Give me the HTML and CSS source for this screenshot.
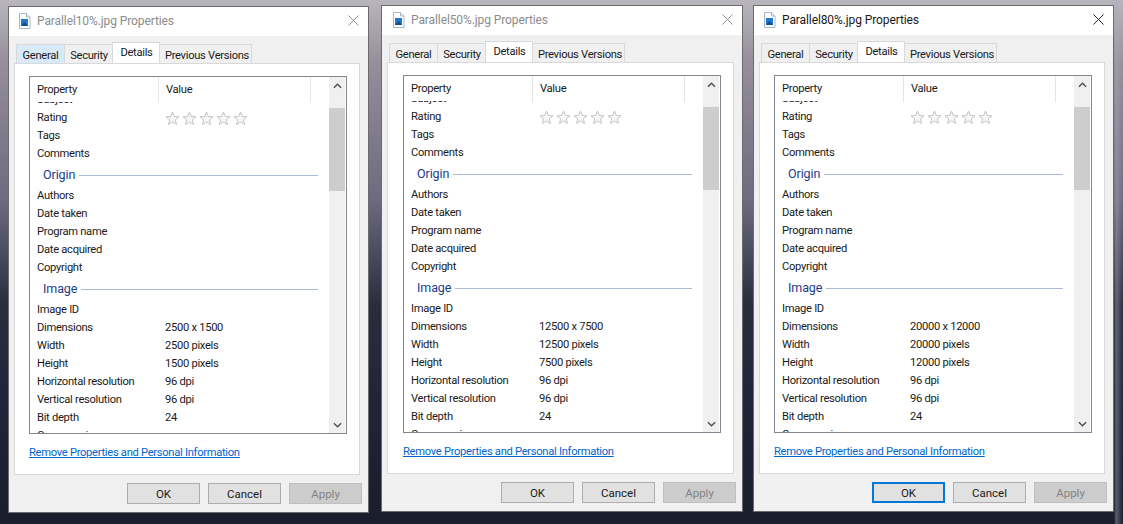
FILE: index.html
```html
<!DOCTYPE html>
<html lang="en">
<head>
<meta charset="utf-8">
<title>Properties</title>
<link rel="stylesheet" href="styles.css">
</head>
<body>
<svg class="defs" width="0" height="0" aria-hidden="true">
  <symbol id="file" viewBox="0 0 14 16"><path d="M1.500.5h7l3.500 3.500v11.500h-10.500z" fill="#fff" stroke="#a9b6c4"/><path d="M8.500.5v3.500h3.500" fill="#e8eef4" stroke="#a9b6c4"/><rect x="3" y="6" width="7" height="7" fill="#1f78c8"/><path d="M3 13l3.500-4 3.500 4z" fill="#0f4f96"/></symbol>
  <symbol id="close" viewBox="0 0 12 12"><path d="M.5.5l11 11M11.500.5l-11 11" fill="none" stroke="currentColor"/></symbol>
  <symbol id="star" viewBox="0 0 15 15"><path d="M7.500 1l1.800 4.500 4.700.3-3.700 3 1.200 4.700-4-2.600-4 2.600 1.200-4.700-3.700-3 4.700-.3z" fill="#f7f7f7" stroke="#c4c4c4"/></symbol>
  <symbol id="up" viewBox="0 0 10 6"><path d="M1 5l4-4 4 4" fill="none" stroke="#505050" stroke-width="1.600"/></symbol>
  <symbol id="down" viewBox="0 0 10 6"><path d="M1 1l4 4 4-4" fill="none" stroke="#505050" stroke-width="1.600"/></symbol>
</svg>

<section class="window win-a">
  <header class="titlebar"><svg class="file-icon"><use href="#file"/></svg><h1 class="title">Parallel10%.jpg Properties</h1><svg class="close"><use href="#close"/></svg></header>
  <nav class="tabs"><span class="tab tab-hover">General</span><span class="tab">Security</span><span class="tab tab-active">Details</span><span class="tab">Previous Versions</span></nav>
  <div class="panel">
    <div class="listbox">
      <div class="listmain">
        <div class="listhead"><span class="col col-name">Property</span><span class="col col-value">Value</span><span class="col col-rest"></span></div>
        <div class="listclip"><div class="rows">
          <div class="row"><span class="name">Subject</span></div>
          <div class="row"><span class="name">Rating</span><span class="stars"><svg class="star"><use href="#star"/></svg><svg class="star"><use href="#star"/></svg><svg class="star"><use href="#star"/></svg><svg class="star"><use href="#star"/></svg><svg class="star"><use href="#star"/></svg></span></div>
          <div class="row"><span class="name">Tags</span></div>
          <div class="row"><span class="name">Comments</span></div>
          <div class="group"><span class="group-name">Origin</span><span class="rule"></span></div>
          <div class="row"><span class="name">Authors</span></div>
          <div class="row"><span class="name">Date taken</span></div>
          <div class="row"><span class="name">Program name</span></div>
          <div class="row"><span class="name">Date acquired</span></div>
          <div class="row"><span class="name">Copyright</span></div>
          <div class="group"><span class="group-name">Image</span><span class="rule"></span></div>
          <div class="row"><span class="name">Image ID</span></div>
          <div class="row"><span class="name">Dimensions</span><span>2500 x 1500</span></div>
          <div class="row"><span class="name">Width</span><span>2500 pixels</span></div>
          <div class="row"><span class="name">Height</span><span>1500 pixels</span></div>
          <div class="row"><span class="name">Horizontal resolution</span><span>96 dpi</span></div>
          <div class="row"><span class="name">Vertical resolution</span><span>96 dpi</span></div>
          <div class="row"><span class="name">Bit depth</span><span>24</span></div>
          <div class="row"><span class="name">Compression</span></div>
        </div></div>
      </div>
      <div class="scrollbar"><span class="arrow"><svg class="chev"><use href="#up"/></svg></span><span class="track"><span class="thumb"></span></span><span class="arrow"><svg class="chev"><use href="#down"/></svg></span></div>
    </div>
    <a class="link">Remove Properties and Personal Information</a>
  </div>
  <footer class="buttons"><button class="btn">OK</button><button class="btn">Cancel</button><button class="btn btn-off">Apply</button></footer>
</section>

<section class="window win-b">
  <header class="titlebar"><svg class="file-icon"><use href="#file"/></svg><h1 class="title">Parallel50%.jpg Properties</h1><svg class="close"><use href="#close"/></svg></header>
  <nav class="tabs"><span class="tab">General</span><span class="tab">Security</span><span class="tab tab-active">Details</span><span class="tab">Previous Versions</span></nav>
  <div class="panel">
    <div class="listbox">
      <div class="listmain">
        <div class="listhead"><span class="col col-name">Property</span><span class="col col-value">Value</span><span class="col col-rest"></span></div>
        <div class="listclip"><div class="rows">
          <div class="row"><span class="name">Subject</span></div>
          <div class="row"><span class="name">Rating</span><span class="stars"><svg class="star"><use href="#star"/></svg><svg class="star"><use href="#star"/></svg><svg class="star"><use href="#star"/></svg><svg class="star"><use href="#star"/></svg><svg class="star"><use href="#star"/></svg></span></div>
          <div class="row"><span class="name">Tags</span></div>
          <div class="row"><span class="name">Comments</span></div>
          <div class="group"><span class="group-name">Origin</span><span class="rule"></span></div>
          <div class="row"><span class="name">Authors</span></div>
          <div class="row"><span class="name">Date taken</span></div>
          <div class="row"><span class="name">Program name</span></div>
          <div class="row"><span class="name">Date acquired</span></div>
          <div class="row"><span class="name">Copyright</span></div>
          <div class="group"><span class="group-name">Image</span><span class="rule"></span></div>
          <div class="row"><span class="name">Image ID</span></div>
          <div class="row"><span class="name">Dimensions</span><span>12500 x 7500</span></div>
          <div class="row"><span class="name">Width</span><span>12500 pixels</span></div>
          <div class="row"><span class="name">Height</span><span>7500 pixels</span></div>
          <div class="row"><span class="name">Horizontal resolution</span><span>96 dpi</span></div>
          <div class="row"><span class="name">Vertical resolution</span><span>96 dpi</span></div>
          <div class="row"><span class="name">Bit depth</span><span>24</span></div>
          <div class="row"><span class="name">Compression</span></div>
        </div></div>
      </div>
      <div class="scrollbar"><span class="arrow"><svg class="chev"><use href="#up"/></svg></span><span class="track"><span class="thumb"></span></span><span class="arrow"><svg class="chev"><use href="#down"/></svg></span></div>
    </div>
    <a class="link">Remove Properties and Personal Information</a>
  </div>
  <footer class="buttons"><button class="btn">OK</button><button class="btn">Cancel</button><button class="btn btn-off">Apply</button></footer>
</section>

<section class="window win-c">
  <header class="titlebar"><svg class="file-icon"><use href="#file"/></svg><h1 class="title title-active">Parallel80%.jpg Properties</h1><svg class="close close-active"><use href="#close"/></svg></header>
  <nav class="tabs"><span class="tab">General</span><span class="tab">Security</span><span class="tab tab-active">Details</span><span class="tab">Previous Versions</span></nav>
  <div class="panel">
    <div class="listbox">
      <div class="listmain">
        <div class="listhead"><span class="col col-name">Property</span><span class="col col-value">Value</span><span class="col col-rest"></span></div>
        <div class="listclip"><div class="rows">
          <div class="row"><span class="name">Subject</span></div>
          <div class="row"><span class="name">Rating</span><span class="stars"><svg class="star"><use href="#star"/></svg><svg class="star"><use href="#star"/></svg><svg class="star"><use href="#star"/></svg><svg class="star"><use href="#star"/></svg><svg class="star"><use href="#star"/></svg></span></div>
          <div class="row"><span class="name">Tags</span></div>
          <div class="row"><span class="name">Comments</span></div>
          <div class="group"><span class="group-name">Origin</span><span class="rule"></span></div>
          <div class="row"><span class="name">Authors</span></div>
          <div class="row"><span class="name">Date taken</span></div>
          <div class="row"><span class="name">Program name</span></div>
          <div class="row"><span class="name">Date acquired</span></div>
          <div class="row"><span class="name">Copyright</span></div>
          <div class="group"><span class="group-name">Image</span><span class="rule"></span></div>
          <div class="row"><span class="name">Image ID</span></div>
          <div class="row"><span class="name">Dimensions</span><span>20000 x 12000</span></div>
          <div class="row"><span class="name">Width</span><span>20000 pixels</span></div>
          <div class="row"><span class="name">Height</span><span>12000 pixels</span></div>
          <div class="row"><span class="name">Horizontal resolution</span><span>96 dpi</span></div>
          <div class="row"><span class="name">Vertical resolution</span><span>96 dpi</span></div>
          <div class="row"><span class="name">Bit depth</span><span>24</span></div>
          <div class="row"><span class="name">Compression</span></div>
        </div></div>
      </div>
      <div class="scrollbar"><span class="arrow"><svg class="chev"><use href="#up"/></svg></span><span class="track"><span class="thumb"></span></span><span class="arrow"><svg class="chev"><use href="#down"/></svg></span></div>
    </div>
    <a class="link">Remove Properties and Personal Information</a>
  </div>
  <footer class="buttons"><button class="btn btn-default">OK</button><button class="btn">Cancel</button><button class="btn btn-off">Apply</button></footer>
</section>
</body>
</html>
```
FILE: styles.css
```css
* { box-sizing: border-box; }
html, body { margin: 0; height: 100%; }
body {
  position: relative;
  width: 1123px;
  height: 524px;
  overflow: hidden;
  font: 11.200px/16px Roboto, "Open Sans", sans-serif;
  letter-spacing: -.3px;
  color: #1a1a1a;
  background:
    linear-gradient(90deg, transparent 1114px, rgba(170,172,185,.45) 1116px, transparent 1123px),
    linear-gradient(#b9b5bd 0, #948f9a 12%, #86808f 22%, #6d6b80 38%, #45465a 50%, #2b2d3e 58%, #22253a 75%, #1a1d2c 100%);
}
.defs { position: absolute; }
.window {
  position: absolute;
  width: 361px;
  height: 507px;
  display: flex;
  flex-direction: column;
  background: #f0f0f0;
  border: 1px solid #6b6b6f;
}
.win-a { left: 8px; top: 6px; }
.win-b { left: 381px; top: 5px; width: 362px; }
.win-c { left: 753px; top: 5px; }
.titlebar {
  height: 29px;
  flex: none;
  display: flex;
  align-items: center;
  padding: 0 9px 2px 9px;
  background: #fff;
}
.win-b .titlebar { padding-left: 10px; }
.file-icon { width: 14px; height: 16px; flex: none; margin-right: 5px; }
.title { flex: 1; margin: 0; font-size: 12px; font-weight: 400; letter-spacing: -.1px; color: #8c8c8c; }
.title-active { color: #1a1a1a; }
.close { width: 11px; height: 11px; flex: none; color: #8a8a8a; }
.close-active { color: #111; }
.tabs {
  display: flex;
  align-items: flex-end;
  height: 27px;
  padding-left: 7px;
  flex: none;
}
.tab {
  height: 19px;
  padding: 3px 0 0 1px;
  width: 49px;
  text-align: center;
  white-space: nowrap;
  background: #f0f0f0;
  border: 1px solid #d9d9d9;
  border-bottom: none;
  margin-left: -1px;
}
.tab:first-child { margin-left: 0; padding-left: 0; }
.tab:last-child { width: 93px; padding-left: 3px; }
.tab-hover { background: #d8eaf9; }
.tab-active {
  position: relative;
  width: 48px;
  height: 21px;
  background: #fff;
  padding-top: 2px;
}
.panel {
  height: 412px;
  margin: 0 8px 0 5px;
  flex: none;
  padding: 12px 12px 0 14px;
  background: #fff;
  border: 1px solid #d9d9d9;
}
.win-b .panel { padding-left: 15px; }
.listbox {
  display: flex;
  height: 358px;
  border: 1px solid #828790;
}
.listmain { flex: 1; min-width: 0; display: flex; flex-direction: column; }
.listhead { display: flex; align-items: flex-start; height: 25px; flex: none; }
.col { height: 26px; padding: 5px 7px 0; border-right: 1px solid #e5e5e5; }
.col-name { width: 129px; }
.col-value { width: 152px; }
.col-rest { flex: 1; border-right: none; }
.listclip { flex: 1; overflow: hidden; }
.rows { margin-top: -11px; }
.row { display: flex; height: 18px; align-items: center; white-space: nowrap; }
.name { width: 135px; flex: none; padding-left: 7px; }
.stars { display: flex; gap: 2px; }
.star { width: 15px; height: 15px; display: block; }
.group { display: flex; align-items: center; height: 24px; padding: 0 11px 0 13px; color: #1c3d8c; font-size: 12.500px; letter-spacing: -.1px; }
.rule { flex: 1; height: 1px; margin-left: 4px; background: #a9bbd6; }
.scrollbar { width: 16px; margin-right: 1px; flex: none; display: flex; flex-direction: column; background: #f0f0f0; }
.arrow { height: 17px; display: flex; align-items: center; justify-content: center; flex: none; }
.chev { width: 9px; height: 6px; display: block; }
.track { flex: 1; padding-top: 14px; }
.thumb { display: block; height: 83px; background: #cdcdcd; }
.link { display: block; margin-top: 11px; color: #0066cc; text-decoration: underline; }
.buttons { flex: 1; display: flex; justify-content: flex-end; gap: 8px; padding: 8px 6px 0 0; }
.btn {
  width: 73px;
  height: 21px;
  padding: 0;
  font: inherit;
  font-size: 11.500px;
  color: #1a1a1a;
  background: #e1e1e1;
  border: 1px solid #adadad;
}
.btn-default { border: 2px solid #0078d7; }
.btn-off { background: #cccccc; border-color: #bfbfbf; color: #838383; }
```
